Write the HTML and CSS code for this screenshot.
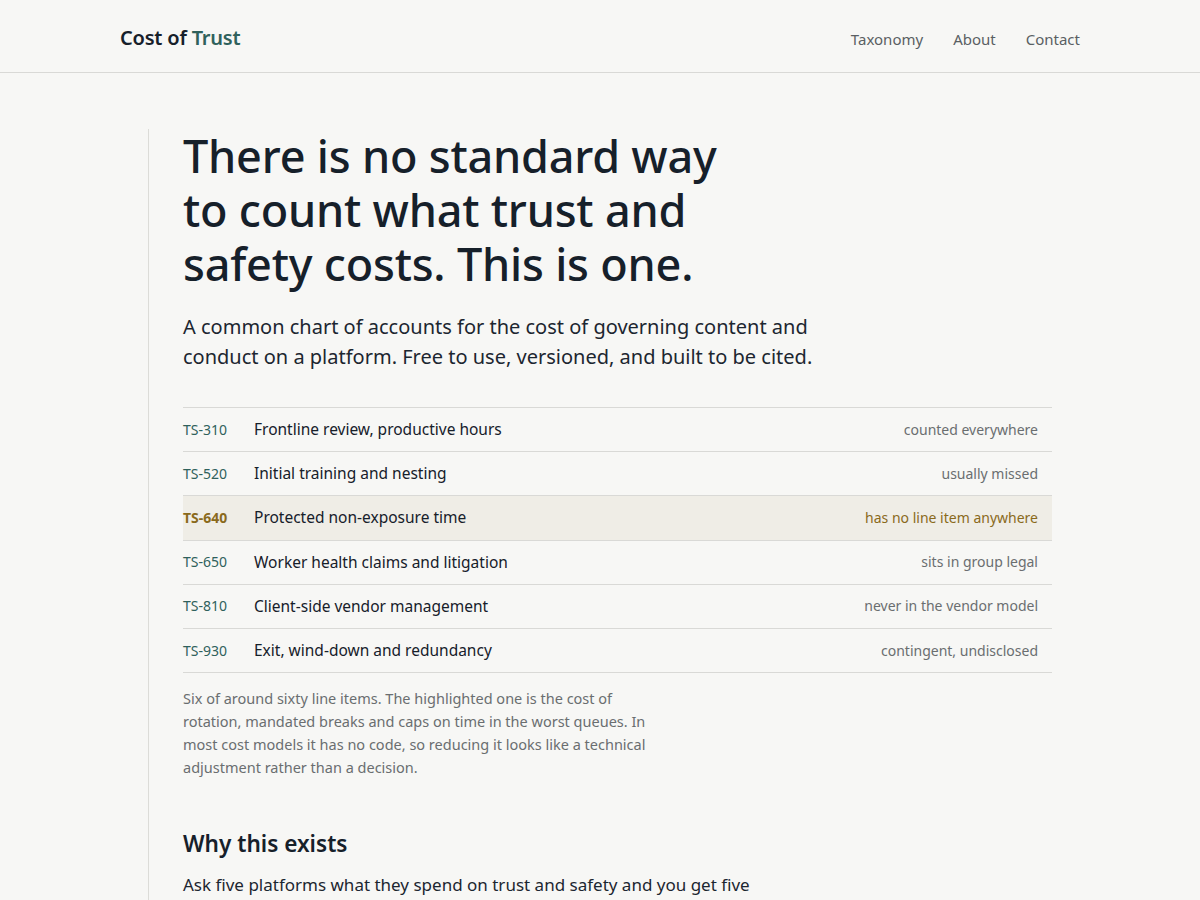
FILE: index.html
```html
<!DOCTYPE html>
<html lang="en">
<head>
<meta charset="utf-8">
<title>Cost of Trust</title>
<link rel="stylesheet" href="styles.css">
</head>
<body>
<header class="site-header">
  <div class="header-inner">
    <a class="logo" href="#">Cost of <span class="logo-accent">Trust</span></a>
    <nav class="nav">
      <a href="#">Taxonomy</a>
      <a href="#">About</a>
      <a href="#">Contact</a>
    </nav>
  </div>
</header>
<main class="main">
  <section class="content">
    <h1 class="headline">There is no standard way to count what trust and safety costs. This is one.</h1>
    <p class="lede">A common chart of accounts for the cost of governing content and conduct on a platform. Free to use, versioned, and built to be cited.</p>
    <div class="ledger">
      <div class="row"><span class="code">TS-310</span><span class="label">Frontline review, productive hours</span><span class="note">counted everywhere</span></div>
      <div class="row"><span class="code">TS-520</span><span class="label">Initial training and nesting</span><span class="note">usually missed</span></div>
      <div class="row row-hl"><span class="code">TS-640</span><span class="label">Protected non-exposure time</span><span class="note">has no line item anywhere</span></div>
      <div class="row"><span class="code">TS-650</span><span class="label">Worker health claims and litigation</span><span class="note">sits in group legal</span></div>
      <div class="row"><span class="code">TS-810</span><span class="label">Client-side vendor management</span><span class="note">never in the vendor model</span></div>
      <div class="row"><span class="code">TS-930</span><span class="label">Exit, wind-down and redundancy</span><span class="note">contingent, undisclosed</span></div>
    </div>
    <p class="caption">Six of around sixty line items. The highlighted one is the cost of rotation, mandated breaks and caps on time in the worst queues. In most cost models it has no code, so reducing it looks like a technical adjustment rather than a decision.</p>
    <h2 class="section-title">Why this exists</h2>
    <p class="body-text">Ask five platforms what they spend on trust and safety and you get five different answers, because nobody counts the same things.</p>
  </section>
</main>
</body>
</html>
```
FILE: styles.css
```css
* { box-sizing: border-box; }
html, body { margin: 0; padding: 0; }
body {
  background: #f7f7f5;
  color: #16202a;
  font-family: "Noto Sans", "Open Sans", sans-serif;
}
a { text-decoration: none; color: inherit; }

.site-header {
  border-bottom: 1px solid #d9d9d6;
  height: 73px;
}
.header-inner {
  width: 960px;
  margin: 0 auto;
  height: 72px;
  padding-top: 5px;
  display: flex;
  align-items: center;
  justify-content: space-between;
}
.logo {
  font-size: 20px;
  font-weight: 600;
  color: #16202a;
  letter-spacing: -0.2px;
  margin-top: -3px;
}
.logo-accent { color: #2f615c; }
.nav {
  display: flex;
  gap: 30px;
  font-size: 15px;
  color: #5a5f63;
}

.main {
  width: 960px;
  margin: 0 auto;
  padding-top: 57px;
}
.content {
  margin-left: 28px;
  width: 904px;
  border-left: 1px solid #dcdcd8;
  padding-left: 34px;
  padding-bottom: 40px;
}
.headline {
  margin: -1px 0 0;
  font-size: 45px;
  line-height: 54px;
  font-weight: 500;
  max-width: 560px;
  letter-spacing: -0.2px;
  color: #16202a;
}
.lede {
  margin: 21px 0 0;
  font-size: 20px;
  line-height: 30px;
  max-width: 650px;
  color: #1c2630;
}
.ledger {
  margin-top: 35px;
  border-top: 1px solid #d9d9d6;
}
.row {
  display: flex;
  align-items: center;
  height: 44.2px;
  border-bottom: 1px solid #d9d9d6;
  padding-right: 14px;
  padding-bottom: 1px;
}
.code {
  width: 71px;
  font-size: 14px;
  color: #2f615c;
}
.label {
  flex: 1;
  font-size: 15.5px;
  color: #16202a;
}
.note {
  font-size: 14px;
  color: #6a6e70;
}
.row-hl { background: #efede6; }
.row-hl .code { color: #8a6a1c; font-weight: 700; }
.row-hl .note { color: #8a6a1c; }

.caption {
  margin: 14px 0 0;
  font-size: 14.5px;
  line-height: 23px;
  color: #6a6e70;
  max-width: 482px;
}
.section-title {
  margin: 50px 0 0;
  font-size: 22.6px;
  font-weight: 600;
  line-height: 30px;
  color: #16202a;
}
.body-text {
  margin: 12px 0 0;
  font-size: 17px;
  line-height: 28px;
  max-width: 600px;
  color: #1c2630;
}
```
